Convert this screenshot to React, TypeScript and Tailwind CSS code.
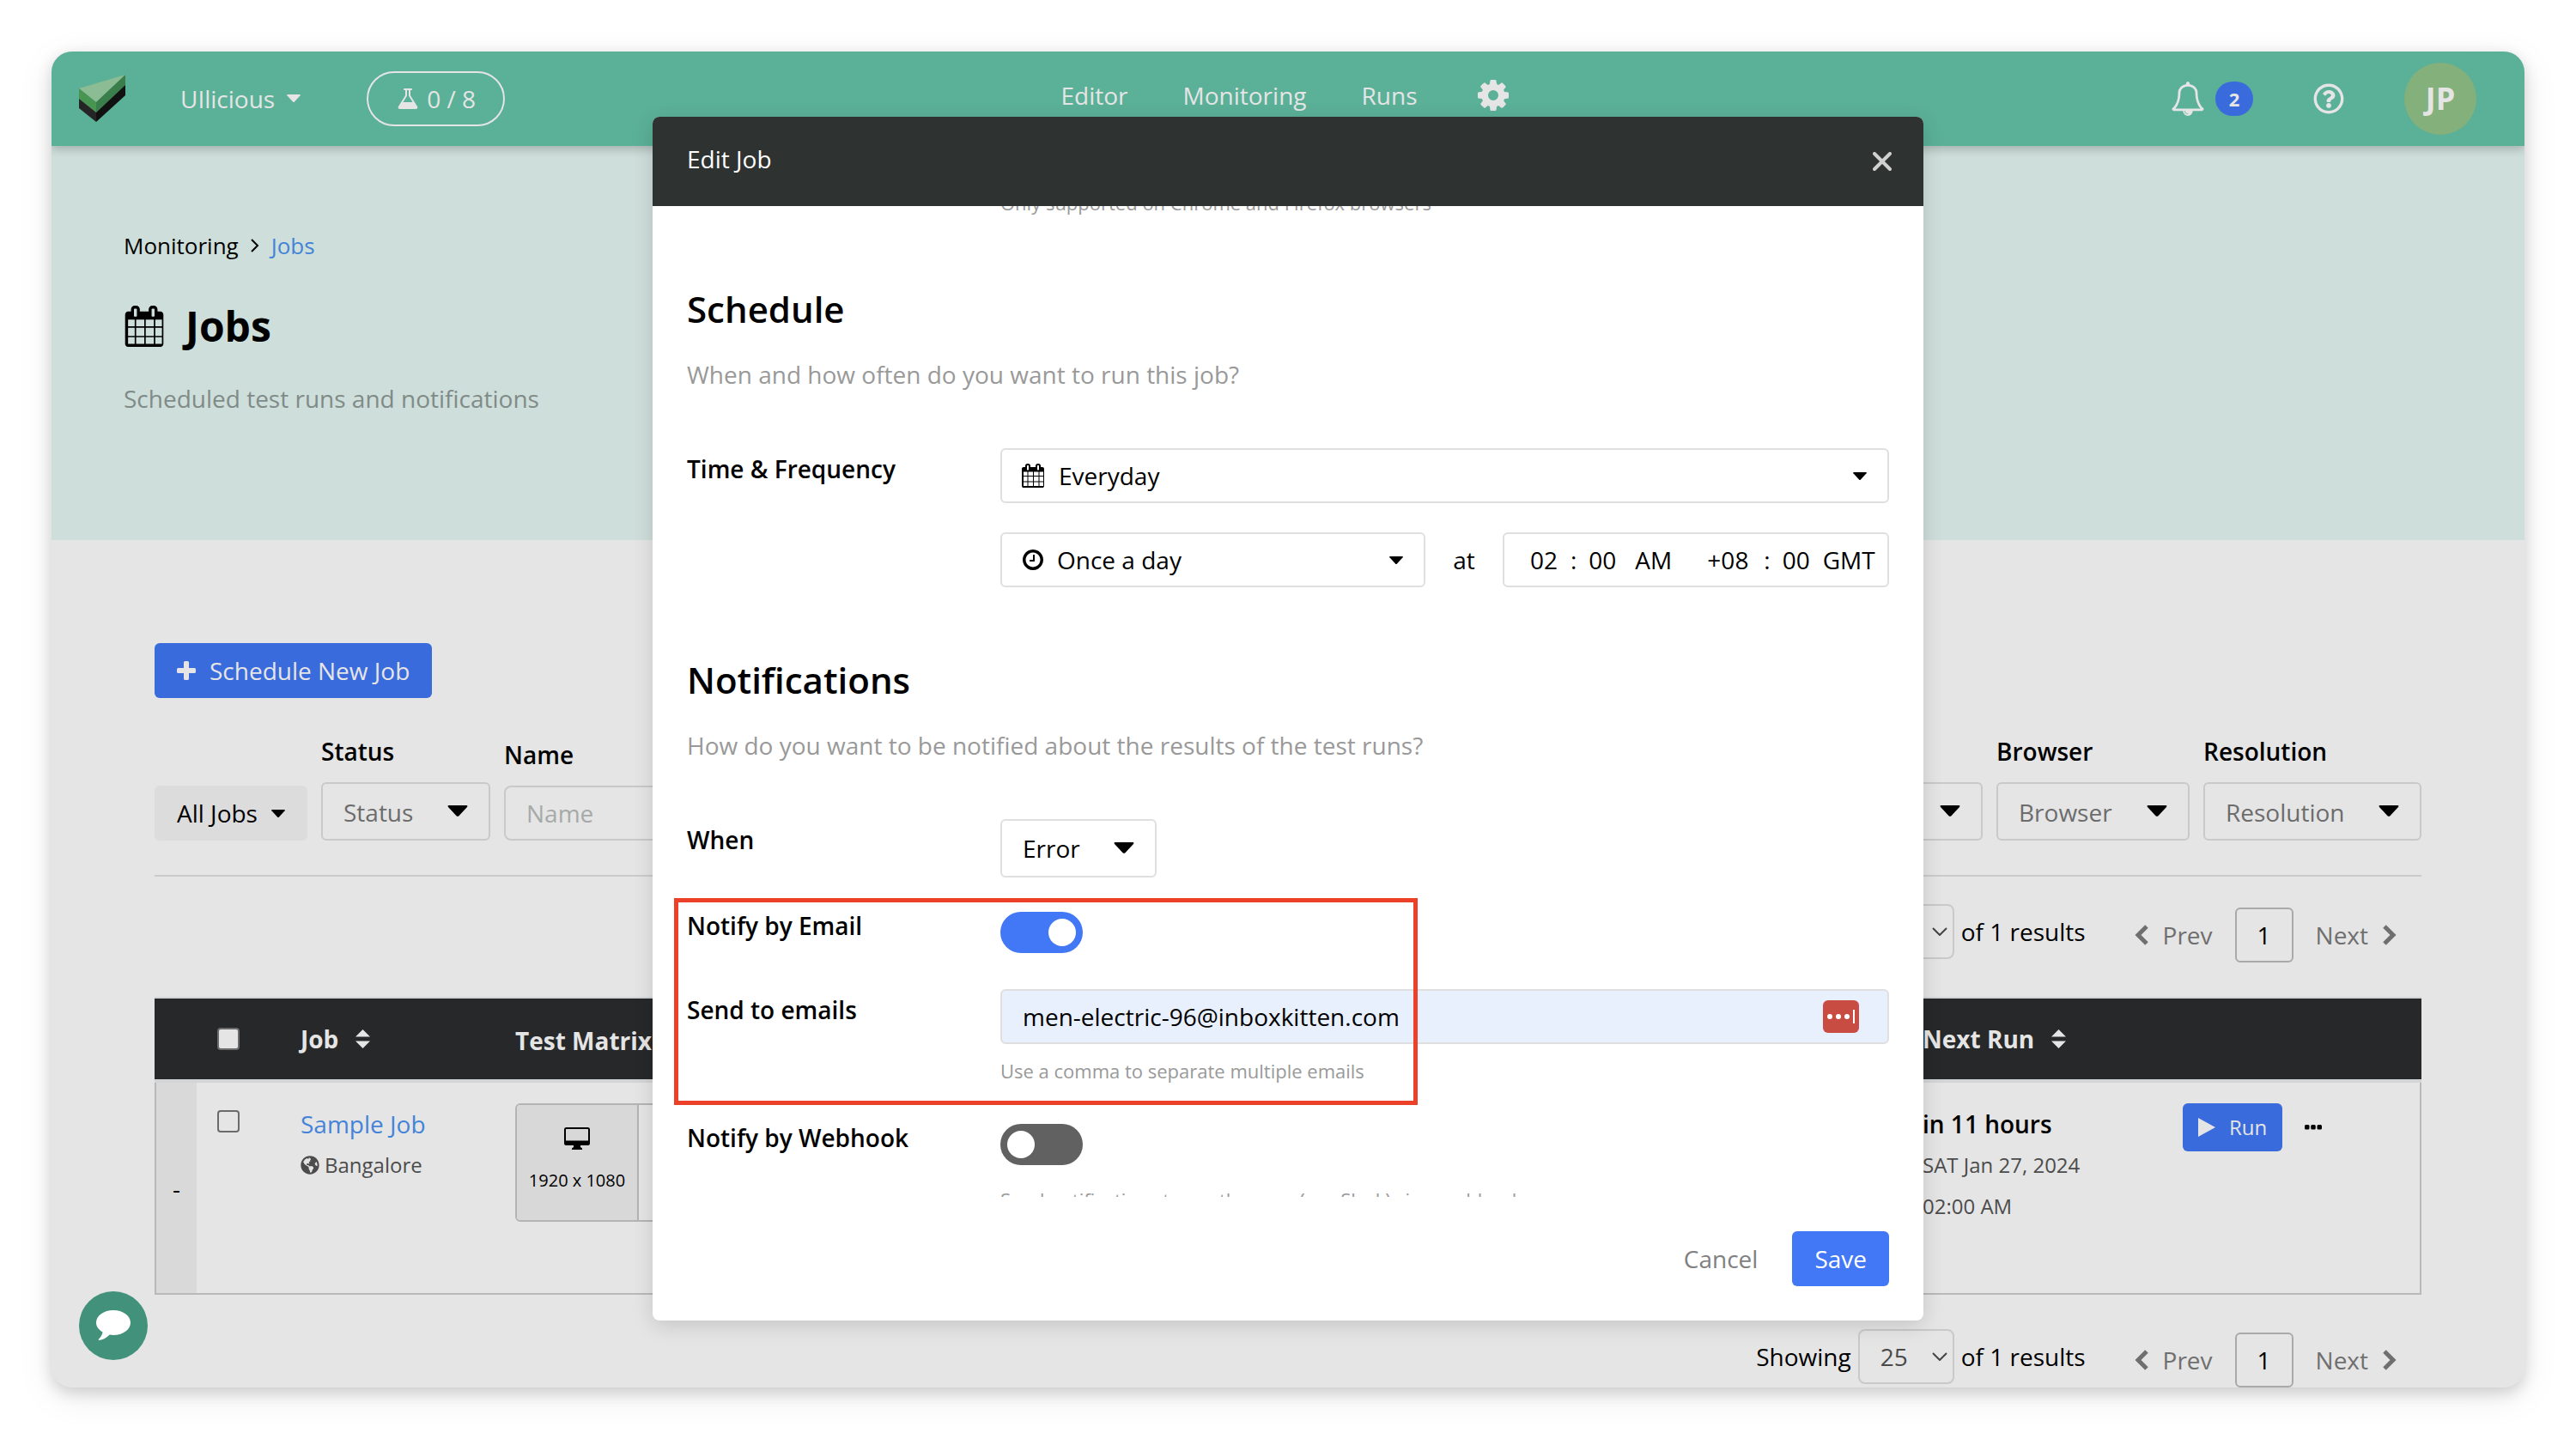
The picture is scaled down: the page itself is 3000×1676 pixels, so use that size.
import type { ReactNode } from "react";
import { FaGlobeAmericas, FaRegQuestionCircle } from "react-icons/fa";

type IconProps = { className?: string };

function Glyph({ d, className = "" }: { d: string; className?: string }) {
  return (
    <svg viewBox="0 0 1792 1792" fill="currentColor" aria-hidden="true" className={`shrink-0 ${className}`}>
      <path d={d} />
    </svg>
  );
}

const calendarPath =
  "M192 1664h288v-288h-288v288zM544 1664h352v-288h-352v288zM192 1312h288v-352h-288v352zM544 1312h352v-352h-352v352zM192 896h288v-288h-288v288zM960 1664h352v-288h-352v288zM544 896h352v-288h-352v288zM1376 1664h288v-288h-288v288zM960 1312h352v-352h-352v352zM576 448v-288q0-13-9.500-22.500t-22.500-9.500h-64q-13 0-22.500 9.500t-9.500 22.500v288q0 13 9.500 22.500t22.500 9.500h64q13 0 22.500-9.500t9.500-22.500zM1376 1312h288v-352h-288v352zM960 896h352v-288h-352v288zM1376 896h288v-288h-288v288zM1344 448v-288q0-13-9.500-22.500t-22.500-9.500h-64q-13 0-22.500 9.500t-9.500 22.500v288q0 13 9.500 22.500t22.500 9.500h64q13 0 22.500-9.500t9.500-22.500zM1728 384v1280q0 52-38 90t-90 38h-1408q-52 0-90-38t-38-90v-1280q0-52 38-90t90-38h128v-96q0-66 47-113t113-47h64q66 0 113 47t47 113v96h384v-96q0-66 47-113t113-47h64q66 0 113 47t47 113v96h128q52 0 90 38t38 90z";
const bellPath =
  "M912 1696q0-16-16-16-59 0-101.500-42.500t-42.500-101.500q0-16-16-16t-16 16q0 73 51.500 124.500t124.500 51.500q16 0 16-16zM246 1408h1300q-266-300-266-832 0-51-24-105t-69-103-121.500-80.500-169.500-31.500-169.500 31.500-121.500 80.500-69 103-24 105q0 532-266 832zM1728 1408q0 52-38 90t-90 38h-448q0 106-75 181t-181 75-181-75-75-181h-448q-52 0-90-38t-38-90q50-42 91-88t85-119.500 74.500-158.500 50-206 19.500-260q0-152 117-282.500t307-158.500q-8-19-8-39 0-40 28-68t68-28 68 28 28 68q0 20-8 39 190 28 307 158.500t117 282.500q0 139 19.500 260t50 206 74.500 158.500 85 119.500 91 88z";
const clockPath =
  "M1024 544v448q0 14-9 23t-23 9h-320q-14 0-23-9t-9-23v-64q0-14 9-23t23-9h224v-352q0-14 9-23t23-9h64q14 0 23 9t9 23zM1440 896q0-148-73-273t-198-198-273-73-273 73-198 198-73 273 73 273 198 198 273 73 273-73 198-198 73-273zM1664 896q0 209-103 385.500t-279.500 279.500-385.500 103-385.500-103-279.500-279.500-103-385.500 103-385.500 279.500-279.500 385.500-103 385.500 103 279.500 279.500 103 385.500z";
const cogPath =
  "M1152 896q0-106-75-181t-181-75-181 75-75 181 75 181 181 75 181-75 75-181zM1664 787v222q0 12-8 23t-20 13l-185 28q-19 54-39 91 35 50 107 138 10 12 10 25t-9 23q-27 37-99 108t-94 71q-12 0-26-9l-138-108q-44 23-91 38-16 136-29 186-7 28-36 28h-222q-14 0-24.500-8.500t-11.500-21.500l-28-184q-49-16-90-37l-141 107q-10 9-25 9-14 0-25-11-126-114-165-168-7-10-7-23 0-12 8-23 15-21 51-66.500t54-70.500q-27-50-41-99l-183-27q-13-2-21-12.500t-8-23.500v-222q0-12 8-23t19-13l186-28q14-46 39-92-40-57-107-138-10-12-10-24 0-10 9-23 26-36 98.500-107.500t94.500-71.500q13 0 26 10l138 107q44-23 91-38 16-136 29-186 7-28 36-28h222q14 0 24.500 8.500t11.500 21.500l28 184q49 16 90 37l142-107q9-9 24-9 13 0 25 10 129 119 165 170 7 8 7 22 0 12-8 23-15 21-51 66.500t-54 70.500q26 50 41 98l183 28q13 2 21 12.500t8 23.500z";
const flaskPath =
  "M1591 1448q56 89 21.500 152.500t-140.500 63.500h-1152q-106 0-140.500-63.500t21.500-152.500l503-793v-399h-64q-26 0-45-19t-19-45 19-45 45-19h512q26 0 45 19t19 45-19 45-45 19h-64v399zM812 724l-272 428h712l-272-428-20-31v-437h-128v437z";

function Caret({ className = "" }: IconProps) {
  return (
    <svg viewBox="0 0 16 9" fill="currentColor" aria-hidden="true" className={`shrink-0 ${className}`}>
      <path d="M1 0h14q1.500 0 .6 1.300L9 8.400q-1 1-2 0L.4 1.300Q-.5 0 1 0z" />
    </svg>
  );
}

function SortIcon({ className = "" }: IconProps) {
  return (
    <svg viewBox="0 0 17 22" fill="currentColor" aria-hidden="true" className={`h-[22px] w-[17px] shrink-0 ${className}`}>
      <path d="M8.500 0 17 8.500H0zM8.500 22 0 13.500h17z" />
    </svg>
  );
}

function ThinChevron({ className = "" }: IconProps) {
  return (
    <svg viewBox="0 0 18 10" fill="none" stroke="currentColor" strokeWidth="2" aria-hidden="true" className={className}>
      <path d="M1 1l8 8 8-8" />
    </svg>
  );
}

function BoldChevron({ left = false }: { left?: boolean }) {
  return (
    <svg viewBox="0 0 18 24" fill="none" stroke="currentColor" strokeWidth="5" aria-hidden="true" className="h-6 w-[18px] shrink-0">
      <path d={left ? "M15 2 5 12l10 10" : "M3 2l10 10L3 22"} />
    </svg>
  );
}

function Logo() {
  return (
    <svg viewBox="0 0 54 56" className="h-14 w-[54px]" aria-label="Home">
      <path d="M0 16 54 0 20 32z" fill="#8cbc94" />
      <path d="M0 16l20 16v12L0 28z" fill="#479550" />
      <path d="M20 32 54 0v12L20 44z" fill="#3a7f4b" />
      <path d="M0 28l20 16v11L0 39z" fill="#252525" />
      <path d="M20 44l34-32v12L20 55z" fill="#111" />
    </svg>
  );
}

function TopBar() {
  return (
    <header className="relative z-10 grid h-[110px] grid-cols-[1fr_auto_1fr] items-center bg-[#5bb098] text-[#e5e5e5] shadow-[0_4px_10px_rgba(0,0,0,0.2)]">
      <div className="flex items-center pl-8">
        <a href="#home">
          <Logo />
        </a>
        <button type="button" className="ml-16 flex items-center gap-[14px] pb-px">
          UIlicious
          <Caret className="h-[9px] w-4" />
        </button>
        <button type="button" className="ml-[77px] flex h-16 items-center gap-2 rounded-full border-2 border-[#e5e5e5] px-8">
          <Glyph d={flaskPath} className="size-7" />
          0 / 8
        </button>
      </div>
      <nav className="flex items-center gap-16 pr-1 pb-2">
        <a href="#editor">Editor</a>
        <a href="#monitoring">Monitoring</a>
        <a href="#runs">Runs</a>
        <a href="#settings" aria-label="Settings" className="ml-1">
          <Glyph d={cogPath} className="size-[42px]" />
        </a>
      </nav>
      <div className="flex items-center justify-end pr-14">
        <button type="button" aria-label="Notifications" className="flex items-center gap-3">
          <Glyph d={bellPath} className="size-10" />
          <span className="flex h-10 w-11 items-center justify-center rounded-full bg-[#3a6bdc] text-[22px] font-bold">2</span>
        </button>
        <a href="#help" aria-label="Help" className="ml-[70px]">
          <FaRegQuestionCircle className="size-9" />
        </a>
        <button type="button" className="ml-[70px] flex size-[84px] items-center justify-center rounded-full bg-[#83b07b] text-4xl font-bold">
          JP
        </button>
      </div>
    </header>
  );
}

function Hero() {
  return (
    <section className="bg-[#cededa] px-[84px] pt-[96px] pb-[144px]">
      <nav aria-label="Breadcrumb" className="flex items-center gap-[14px] text-[26px] leading-[40px]">
        <a href="#monitoring">Monitoring</a>
        <svg viewBox="0 0 10 16" fill="none" stroke="currentColor" strokeWidth="2" className="h-4 w-[10px]" aria-hidden="true">
          <path d="M1 1l7 7-7 7" />
        </svg>
        <a href="#jobs" className="text-[#4384d9]">Jobs</a>
      </nav>
      <h1 className="mt-[42px] flex items-center gap-6 text-5xl leading-[64px] font-bold">
        <Glyph d={calendarPath} className="size-12" />
        Jobs
      </h1>
      <p className="mt-8 mb-px leading-[40px] text-[#808b88]">Scheduled test runs and notifications</p>
    </section>
  );
}

function FilterSelect({ id, label, className }: { id: string; label: string; className: string }) {
  return (
    <div className={`shrink-0 ${className}`}>
      <label htmlFor={id} className="block leading-[40px] font-semibold">{label}</label>
      <div className="relative mt-4">
        <select id={id} className="h-[68px] w-full appearance-none rounded-md border-2 border-[#c9c9c9] px-6 pt-[2px] text-[#6c6c6c]">
          <option>{label}</option>
        </select>
        <Caret className="pointer-events-none absolute top-[27px] right-[26px] h-[13px] w-6" />
      </div>
    </div>
  );
}

function Filters() {
  return (
    <form className="mt-[42px] flex items-end gap-4">
      <button type="button" className="flex h-16 w-[178px] shrink-0 items-center justify-between rounded-md bg-[#dcdcdc] px-[26px]">
        All Jobs
        <Caret className="h-[9px] w-4" />
      </button>
      <FilterSelect id="filter-status" label="Status" className="w-[197px]" />
      <div className="min-w-0 flex-1">
        <label htmlFor="filter-name" className="block leading-[40px] font-semibold">Name</label>
        <input
          id="filter-name"
          type="text"
          placeholder="Name"
          className="mt-4 h-16 w-full rounded-lg border-2 border-[#c9c9c9] px-6 placeholder:text-[#a5aaa9]"
        />
      </div>
      <FilterSelect id="filter-region" label="Region" className="w-[212px]" />
      <FilterSelect id="filter-browser" label="Browser" className="w-[225px]" />
      <FilterSelect id="filter-resolution" label="Resolution" className="w-[254px]" />
    </form>
  );
}

function Pagination({ id }: { id: string }) {
  return (
    <div className="mt-8 flex items-start justify-end">
      <div className="flex items-center gap-2">
        <label htmlFor={id}>Showing</label>
        <div className="relative">
          <select id={id} className="h-16 w-28 appearance-none rounded-lg border-2 border-[#c9c9c9] px-6 text-[#4a4a4a]">
            <option>25</option>
          </select>
          <ThinChevron className="pointer-events-none absolute top-[27px] right-2 h-[10px] w-[18px] text-[#444]" />
        </div>
        <span>of 1 results</span>
      </div>
      <nav aria-label="Pages" className="mt-1 ml-14 flex h-16 items-center pr-7 text-[#6f6f6f]">
        <button type="button" className="flex items-center gap-4">
          <BoldChevron left />
          Prev
        </button>
        <button type="button" aria-current="page" className="mx-[26px] h-16 w-[68px] rounded-md border-2 border-[#a9a9a9] text-black">
          1
        </button>
        <button type="button" className="flex items-center gap-4">
          Next
          <BoldChevron />
        </button>
      </nav>
    </div>
  );
}

function JobsTable() {
  return (
    <table className="mt-10 w-full table-fixed border-separate border-spacing-0 text-left">
      <colgroup>
        <col className="w-[49px]" />
        <col className="w-[96px]" />
        <col className="w-[251px]" />
        <col />
        <col className="w-[303px]" />
        <col className="w-[302px]" />
      </colgroup>
      <thead>
        <tr className="h-[100px] bg-[#262829] text-[#e5e5e5] [&>th]:border-t-2 [&>th]:border-b-4 [&>th]:border-[#d2d4d5]">
          <th />
          <th className="px-6">
            <input type="checkbox" aria-label="Select all jobs" className="block size-[26px] appearance-none rounded-sm border-2 border-[#6b6b6b] bg-[#e5e5e5]" />
          </th>
          <th className="px-[25px]">
            <span className="flex items-center gap-5">Job <SortIcon /></span>
          </th>
          <th className="px-6 pt-1">Test Matrix</th>
          <th className="px-6">
            <span className="flex items-center gap-5">Next Run <SortIcon /></span>
          </th>
          <th />
        </tr>
      </thead>
      <tbody>
        <tr className="h-[247px] align-top [&>td]:border-b-2 [&>td]:border-[#b9b9b9]">
          <td className="border-l-2 bg-[#d9d9d9] text-center align-middle">-</td>
          <td className="px-6 pt-8">
            <input type="checkbox" aria-label="Select Sample Job" className="block size-[26px] appearance-none rounded-sm border-2 border-[#6b6b6b]" />
          </td>
          <td className="px-[25px] pt-6">
            <a href="#sample-job" className="block leading-[48px] text-[#4384d9]">Sample Job</a>
            <span className="flex items-center gap-[6px] text-2xl leading-[48px] text-[#4c4c4c]">
              <FaGlobeAmericas className="size-[22px]" />
              Bangalore
            </span>
          </td>
          <td className="px-6 pt-6">
            <div className="flex h-[138px] w-72 overflow-hidden rounded-md border-2 border-[#b4b4b4]">
              <div className="flex w-[142px] shrink-0 flex-col items-center border-r-2 border-[#b4b4b4] bg-[#d8d8d8] pt-[26px]">
                <svg viewBox="0 0 30 26" className="h-[26px] w-[30px]" aria-hidden="true">
                  <path d="M2.500 0h25A2.500 2.500 0 0 1 30 2.500v16a2.500 2.500 0 0 1-2.500 2.500H19v2l2 1.500V26H9v-1.500l2-1.500v-2H2.500A2.500 2.500 0 0 1 0 18.500v-16A2.500 2.500 0 0 1 2.500 0zM2 2.500v13h26v-13a.5.5 0 0 0-.5-.5h-25a.5.5 0 0 0-.5.500z" />
                </svg>
                <span className="mt-5 text-xl leading-[32px] whitespace-nowrap">1920 x 1080</span>
              </div>
            </div>
          </td>
          <td className="px-6 pt-6">
            <strong className="block leading-[48px] font-semibold">in 11 hours</strong>
            <span className="block text-2xl leading-[48px] text-[#4c4c4c]">SAT Jan 27, 2024</span>
            <span className="block text-2xl leading-[48px] text-[#4c4c4c]">02:00 AM</span>
          </td>
          <td className="border-r-2 px-6 pt-6">
            <div className="flex items-center gap-[26px]">
              <button type="button" className="flex h-14 items-center gap-4 rounded-md bg-[#3a6bdc] px-[18px] text-2xl text-[#e5e5e5]">
                <svg viewBox="0 0 20 22" fill="currentColor" className="h-[22px] w-5" aria-hidden="true">
                  <path d="M0 0l20 11L0 22z" />
                </svg>
                Run
              </button>
              <button type="button" aria-label="More actions">
                <svg viewBox="0 0 20 6" fill="currentColor" className="h-[6px] w-5" aria-hidden="true">
                  <rect width="5.500" height="5.500" rx="1.500" />
                  <rect x="7.250" width="5.500" height="5.500" rx="1.500" />
                  <rect x="14.500" width="5.500" height="5.500" rx="1.500" />
                </svg>
              </button>
            </div>
          </td>
        </tr>
      </tbody>
    </table>
  );
}

function Row({ label, htmlFor, className = "", labelClass = "pt-1", children }: { label: string; htmlFor: string; className?: string; labelClass?: string; children: ReactNode }) {
  return (
    <div className={`flex items-start ${className}`}>
      <label htmlFor={htmlFor} className={`w-[365px] shrink-0 leading-[40px] font-semibold ${labelClass}`}>{label}</label>
      <div className="min-w-0 flex-1">{children}</div>
    </div>
  );
}

function Toggle({ id, on = false }: { id: string; on?: boolean }) {
  return (
    <input
      id={id}
      type="checkbox"
      role="switch"
      defaultChecked={on}
      className="mt-1 flex h-12 w-24 appearance-none items-center justify-start rounded-full bg-[#616161] px-2 before:size-8 before:rounded-full before:bg-white checked:justify-end checked:bg-[#4277f6]"
    />
  );
}

function SectionTitle({ title, text }: { title: string; text: string }) {
  return (
    <>
      <h2 className="mt-20 text-[42px] leading-[56px] font-semibold">{title}</h2>
      <p className="mt-7 mb-[66px] leading-[40px] text-[#999]">{text}</p>
    </>
  );
}

const boxClass = "rounded-md border-2 border-[#dfdfdf] bg-white";

function TimePart({ label, value, className }: { label: string; value: string; className: string }) {
  return <input type="text" aria-label={label} defaultValue={value} className={`h-10 bg-transparent p-0 ${className}`} />;
}

function EditJobDialog() {
  return (
    <section role="dialog" aria-labelledby="dialog-title" className="flex w-[1480px] max-w-full flex-col overflow-hidden rounded-lg bg-white shadow-[0_6px_24px_rgba(0,0,0,0.14)]">
      <header className="flex h-[104px] shrink-0 items-center justify-between bg-[#2e3230] px-10 text-white">
        <h2 id="dialog-title" className="pb-[6px]">Edit Job</h2>
        <button type="button" aria-label="Close" className="-mr-[10px] flex size-9 items-center justify-center text-[#cfd0cf]">
          <svg viewBox="0 0 22 22" fill="none" stroke="currentColor" strokeWidth="4" strokeLinecap="round" className="size-[22px]" aria-hidden="true">
            <path d="M2 2l18 18M20 2 2 20" />
          </svg>
        </button>
      </header>

      <form className="min-h-0 flex-1 overflow-hidden px-10">
        <p className="-mt-5 ml-[365px] text-[22px] leading-[32px] text-[#999]">Only supported on Chrome and Firefox browsers</p>

        <SectionTitle title="Schedule" text="When and how often do you want to run this job?" />
        <Row label="Time &amp; Frequency" htmlFor="frequency">
          <div className="relative">
            <Glyph d={calendarPath} className="pointer-events-none absolute top-[18px] left-6 size-7" />
            <select id="frequency" className={`h-16 w-full appearance-none pr-14 pl-[66px] ${boxClass}`}>
              <option>Everyday</option>
            </select>
            <Caret className="pointer-events-none absolute top-[28px] right-[26px] h-[9px] w-4" />
          </div>
          <div className="mt-[34px] flex items-center">
            <div className="relative flex-1">
              <Glyph d={clockPath} className="pointer-events-none absolute top-[18px] left-6 size-7" />
              <select aria-label="Times per day" className={`h-16 w-full appearance-none pr-14 pl-[64px] ${boxClass}`}>
                <option>Once a day</option>
              </select>
              <Caret className="pointer-events-none absolute top-[28px] right-[26px] h-[9px] w-4" />
            </div>
            <span className="w-[90px] text-center">at</span>
            <div className={`flex h-16 w-[450px] items-center pl-[30px] ${boxClass}`}>
              <TimePart label="Hour" value="02" className="w-[47px]" />
              :
              <TimePart label="Minute" value="00" className="ml-[14px] w-[54px]" />
              <TimePart label="AM or PM" value="AM" className="w-[84px]" />
              <TimePart label="Offset hours" value="+08" className="w-[66px]" />
              :
              <TimePart label="Offset minutes" value="00" className="ml-[14px] w-[47px]" />
              <span>GMT</span>
            </div>
          </div>
        </Row>

        <SectionTitle title="Notifications" text="How do you want to be notified about the results of the test runs?" />
        <Row label="When" htmlFor="when">
          <div className="relative w-[182px]">
            <select id="when" className={`h-[68px] w-full appearance-none px-6 ${boxClass}`}>
              <option>Error</option>
            </select>
            <Caret className="pointer-events-none absolute top-[27px] right-[26px] h-[13px] w-6" />
          </div>
        </Row>

        <div className="relative mt-9">
          <Row label="Notify by Email" htmlFor="by-email" labelClass="">
            <Toggle id="by-email" on />
          </Row>
          <Row label="Send to emails" htmlFor="emails" className="mt-[42px]">
            <div className="relative">
              <input
                id="emails"
                type="email"
                defaultValue="men-electric-96@inboxkitten.com"
                className="h-16 w-full rounded-md border-2 border-[#dfdfdf] bg-[#e8effd] px-6"
              />
              <svg viewBox="0 0 42 38" className="absolute top-[13px] right-[35px] h-[38px] w-[42px]" aria-hidden="true">
                <rect width="42" height="38" rx="6" fill="#c84c42" />
                <circle cx="8" cy="19" r="3" fill="#fff" />
                <circle cx="18" cy="19" r="3" fill="#fff" />
                <circle cx="28" cy="19" r="3" fill="#fff" />
                <rect x="35" y="11" width="2" height="16" fill="#fff" />
              </svg>
            </div>
            <p className="mt-[15px] text-[22px] leading-[32px] text-[#999]">Use a comma to separate multiple emails</p>
          </Row>
          <div className="pointer-events-none absolute -top-3 -bottom-6 -left-[15px] w-[866px] border-5 border-[#ec4128]" />
        </div>

        <Row label="Notify by Webhook" htmlFor="by-webhook" className="mt-[42px]" labelClass="">
          <Toggle id="by-webhook" />
          <p className="mt-6 text-[22px] leading-[32px] text-[#999]">Send notifications to another app (e.g. Slack) via a webhook</p>
        </Row>
      </form>

      <footer className="flex h-36 shrink-0 items-center justify-end gap-10 px-10">
        <button type="button" className="text-[#808080]">Cancel</button>
        <button type="submit" className="h-16 rounded-md bg-[#4277f6] px-[26px] text-white">Save</button>
      </footer>
    </section>
  );
}

export default function App() {
  return (
    <div className="min-h-screen bg-white p-[60px] font-['Open_Sans',sans-serif] text-[28px] leading-[40px] text-black">
      <div className="relative overflow-hidden rounded-3xl bg-[#e5e5e5] shadow-[0_10px_44px_rgba(0,0,0,0.08),0_6px_18px_rgba(0,0,0,0.16)]">
        <TopBar />
        <Hero />
        <main className="px-[120px] pt-[120px]">
          <button type="button" className="flex h-16 items-center gap-4 rounded-md bg-[#3a6bdc] px-[26px] text-[#e5e5e5]">
            <svg viewBox="0 0 22 22" fill="currentColor" className="size-[22px]" aria-hidden="true">
              <path d="M9.500 0h3a1.500 1.500 0 0 1 1.500 1.500V8h6.500A1.500 1.500 0 0 1 22 9.500v3a1.500 1.500 0 0 1-1.500 1.500H14v6.500a1.500 1.500 0 0 1-1.500 1.500h-3A1.500 1.500 0 0 1 8 20.500V14H1.500A1.500 1.500 0 0 1 0 12.500v-3A1.500 1.500 0 0 1 1.500 8H8V1.500A1.500 1.500 0 0 1 9.500 0z" />
            </svg>
            Schedule New Job
          </button>
          <Filters />
          <hr className="mt-10 border-t-2 border-[#cbcbcb]" />
          <Pagination id="page-size-top" />
          <JobsTable />
          <div className="pt-2">
            <Pagination id="page-size-bottom" />
          </div>
        </main>
        <button type="button" aria-label="Open chat" className="absolute bottom-8 left-8 flex size-20 items-center justify-center rounded-full bg-[#42917b]">
          <svg viewBox="0 0 40 36" fill="#fff" className="h-9 w-10" aria-hidden="true">
            <path d="M20 0c11 0 20 6.300 20 14.500S31 29 20 29c-1.500 0-3-.1-4.300-.4C12 32.500 8 34.700 3.500 35c-.8 0-1-.8-.5-1.300 2-2.200 4-4.700 4.600-8.200C3 23 0 19 0 14.500 0 6.300 9 0 20 0z" />
          </svg>
        </button>
        <div className="absolute inset-0 z-20 flex justify-center pt-[76px] pb-[78px]">
          <EditJobDialog />
        </div>
      </div>
    </div>
  );
}
